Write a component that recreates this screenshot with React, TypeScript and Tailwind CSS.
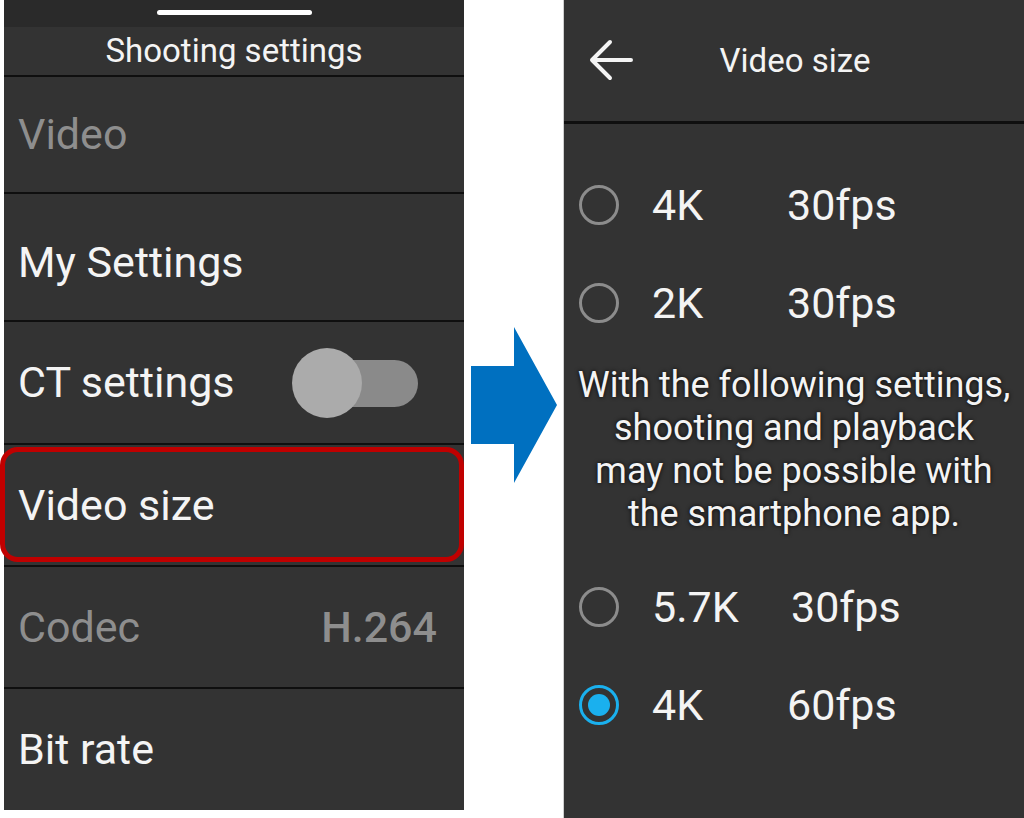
import React from "react";

const font = "font-['Roboto','Liberation_Sans',sans-serif]";

const Divider = () => <div className="h-[2px] bg-[#0f0f0f]" />;

const Radio = ({ checked }: { checked?: boolean }) =>
  checked ? (
    <div className="w-[40px] h-[40px] rounded-full border-[3px] border-[#1ab0ee] flex items-center justify-center">
      <div className="w-[22px] h-[22px] rounded-full bg-[#1ab0ee]" />
    </div>
  ) : (
    <div className="w-[40px] h-[40px] rounded-full border-[3px] border-[#8c8c8c]" />
  );

const Option = ({ size, fps, checked, wide }: { size: string; fps: string; checked?: boolean; wide?: boolean }) => (
  <div className="h-[98px] flex items-center pl-[15px]">
    <Radio checked={checked} />
    <span className={`ml-[33px] ${wide ? "w-[139px]" : "w-[135px]"}`}>{size}</span>
    <span>{fps}</span>
  </div>
);

export default function App() {
  return (
    <div className={`w-[1024px] h-[818px] bg-white flex ${font}`}>
      {/* Shooting settings panel */}
      <div className="ml-[4px] w-[460px] h-[810px] bg-[#333333] flex flex-col text-[#f4f4f4]">
        <div className="h-[27px] bg-[#2a2a2a] flex justify-center pt-[10px]">
          <div className="w-[155px] h-[5px] rounded-full bg-white" />
        </div>
        <div className="h-[48px] flex items-center justify-center text-[33px]">Shooting settings</div>
        <Divider />
        <div className="h-[115px] flex items-center pl-[14px] text-[43px] text-[#8e8e8e]">Video</div>
        <Divider />
        <div className="h-[126px] flex items-center pl-[14px] pt-[10px] text-[43px]">My Settings</div>
        <Divider />
        <div className="h-[121px] flex items-center justify-between pl-[14px] pr-[46px] text-[43px]">
          <span>CT settings</span>
          <div className="relative w-[126px] h-[70px]">
            <div className="absolute left-[10px] right-0 top-[12px] h-[47px] rounded-full bg-[#8a8a8a]" />
            <div className="absolute left-0 top-0 w-[70px] h-[70px] rounded-full bg-[#ababab]" />
          </div>
        </div>
        <Divider />
        <div className="relative h-[120px] flex items-center pl-[14px] text-[43px]">
          <span>Video size</span>
          <div className="absolute -left-[4px] right-0 top-[2px] bottom-[3px] rounded-[18px] border-[5px] border-[#c00000]" />
        </div>
        <Divider />
        <div className="h-[120px] flex items-center justify-between pl-[14px] pr-[27px] text-[43px] text-[#8e8e8e]">
          <span>Codec</span>
          <span className="font-medium">H.264</span>
        </div>
        <Divider />
        <div className="h-[121px] flex items-center pl-[14px] text-[43px]">Bit rate</div>
      </div>

      {/* arrow */}
      <div className="w-[99px] pt-[327px] pl-[7px]">
        <svg width="86" height="156" viewBox="0 0 86 156">
          <polygon points="0,39 43,39 43,0 86,78 43,156 43,117 0,117" fill="#0070c0" />
        </svg>
      </div>

      {/* Video size screen */}
      <div className="flex-1 h-full bg-[#333333] border-l border-[#cfcfcf] flex flex-col text-[#f4f4f4]">
        <div className="h-[121px] relative flex items-center justify-center text-[33px]">
          <svg className="absolute left-[24px] top-[38px]" width="46" height="44" viewBox="0 0 46 44">
            <path d="M43 22H4M22 4L4 22l18 18" fill="none" stroke="#f4f4f4" strokeWidth="4" strokeLinecap="round" strokeLinejoin="round" />
          </svg>
          <span className="pl-[2px]">Video size</span>
        </div>
        <div className="h-[3px] bg-[#0f0f0f]" />
        <div className="h-[32px]" />
        <div className="text-[43px]">
          <Option size="4K" fps="30fps" />
          <Option size="2K" fps="30fps" />
        </div>
        <p className="mt-[12px] text-center text-[36px] leading-[43px] [text-shadow:0_0_4px_rgba(0,0,0,0.9)]">
          With the following settings,
          <br />
          shooting and playback
          <br />
          may not be possible with
          <br />
          the smartphone app.
        </p>
        <div className="mt-[22px] text-[43px]">
          <Option size="5.7K" fps="30fps" wide />
          <Option size="4K" fps="60fps" checked />
        </div>
      </div>
    </div>
  );
}
